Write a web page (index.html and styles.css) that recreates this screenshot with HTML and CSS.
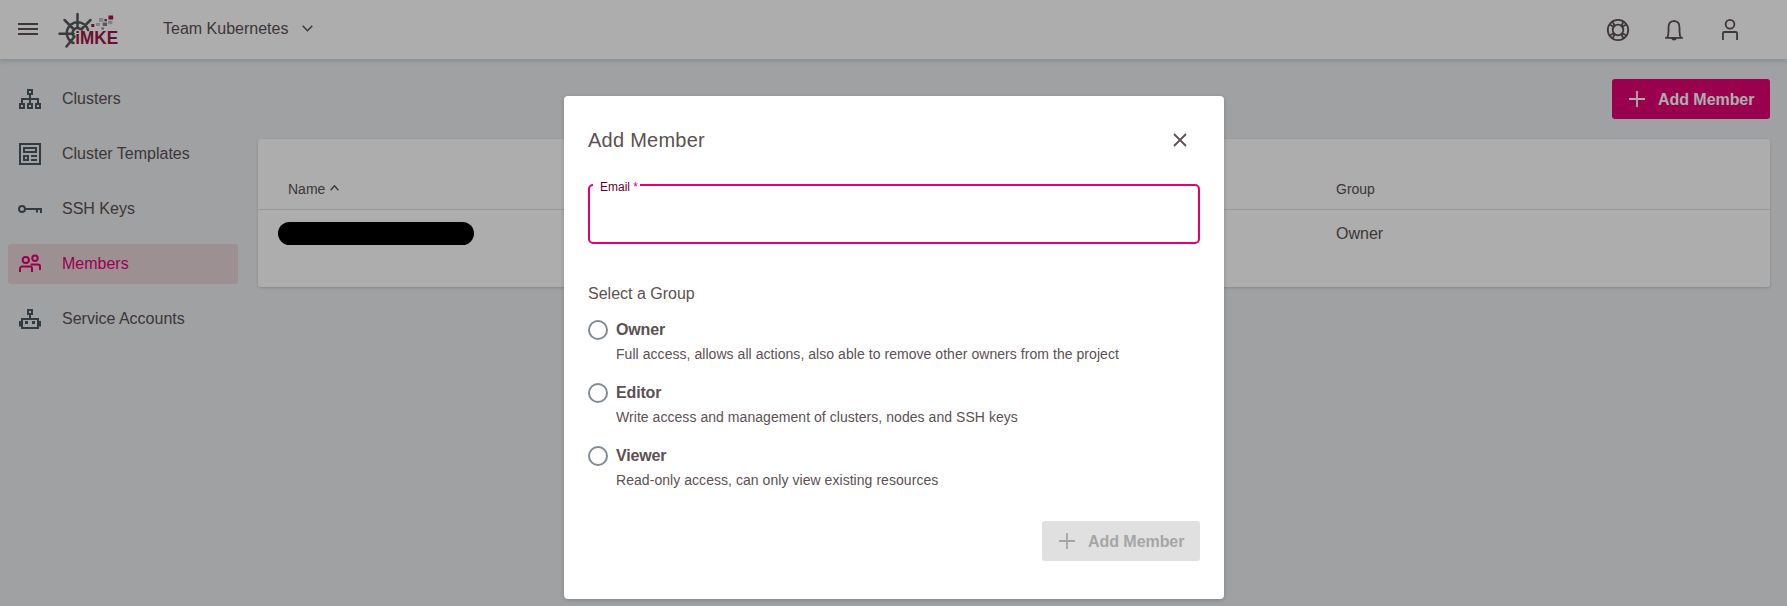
FILE: index.html
```html
<!DOCTYPE html>
<html lang="en">
<head>
<meta charset="utf-8">
<title>Members</title>
<link rel="stylesheet" href="styles.css">
</head>
<body>
<div class="app">
  <header class="topbar">
    <svg class="menu-icon" width="20" height="12" viewBox="0 0 20 12"><path d="M0 1h20M0 6h20M0 11h20"/></svg>
    <svg class="logo" width="62" height="38" viewBox="0 0 62 38">
      <g class="wheel">
        <path d="M15.500 31A10.800 10.800 0 1 1 30 18M16 24.500A5 5 0 0 1 20 16L24 17.500M19.500 2v14M1.500 21.800h14M6.500 8l9.500 9.500M32.500 8l-9 9M8.500 34.500l8-10"/>
      </g>
      <g class="crimson"><rect x="50.500" y="3.500" width="4.700" height="4"/><rect x="33.300" y="12" width="3" height="3"/><rect x="46.500" y="7" width="2.300" height="2.300"/></g>
      <g class="pale"><rect x="41" y="6" width="4.300" height="3.800"/><rect x="50" y="8.700" width="4.300" height="3.500"/><rect x="38" y="11" width="4" height="3"/></g>
      <rect class="slate" x="44.700" y="10.500" width="4.300" height="3.500"/>
      <rect class="rose" x="43.300" y="15.300" width="2.700" height="2.400"/>
      <text x="17.300" y="32.300" textLength="42.800" lengthAdjust="spacingAndGlyphs">iMKE</text>
    </svg>
    <div class="project"><span>Team Kubernetes</span>
      <svg width="11" height="7" viewBox="0 0 11 7"><path d="M.7.8l4.800 4.900L10.300.8"/></svg>
    </div>
    <div class="tools">
      <svg width="24" height="24" viewBox="0 0 24 24"><circle cx="12" cy="12" r="10.200"/><circle cx="12" cy="12" r="5.300"/><path d="M8.700 7.800L6.700 4M7.800 8.700L4 6.700M15.300 7.800L17.300 4M16.200 8.700L20 6.700M8.700 16.200L6.700 20M7.800 15.300L4 17.300M15.300 16.200L17.300 20M16.200 15.300L20 17.300"/></svg>
      <svg width="24" height="24" viewBox="0 0 24 24"><path d="M3.200 19.800h17.600M5.200 19.500c1.200-2 1.300-4 1.300-6.500V9.500C6.500 5.500 8.500 3.200 12 3.200s5.500 2.300 5.500 6.300V13c0 2.500.1 4.500 1.300 6.500M12 1.900v1.300M10.300 20.500a1.700 1.200 0 0 0 3.400 0"/></svg>
      <svg width="24" height="24" viewBox="0 0 24 24"><circle cx="12" cy="6.200" r="4.400"/><path d="M4.900 22v-6.500a1.500 1.500 0 0 1 1.500-1.500h11.200a1.500 1.500 0 0 1 1.500 1.500V22"/></svg>
    </div>
  </header>
  <div class="body">
    <nav class="sidebar">
      <a class="item"><svg viewBox="0 0 24 24"><path d="M10 3h4v4h-4zM2 17h4v4H2zM10 17h4v4h-4zM18 17h4v4h-4zM12 7v10M4 17v-5h16v5"/></svg><span>Clusters</span></a>
      <a class="item"><svg viewBox="0 0 24 24"><path d="M2 2h20v20H2zM6 6h12v4H6zM6 14h4v4H6zM13 14h6M13 18h6"/></svg><span>Cluster Templates</span></a>
      <a class="item"><svg viewBox="0 0 24 24"><circle cx="4" cy="12" r="3"/><path d="M7 12h16v4M19 12v3.500"/></svg><span>SSH Keys</span></a>
      <a class="item active"><svg viewBox="0 0 24 24"><circle cx="7.800" cy="8" r="3.100"/><circle cx="17" cy="6.300" r="2.700"/><path d="M2 20v-3.500a2 2 0 0 1 2-2h8a2 2 0 0 1 2 2V20M12.700 12.500H20a2 2 0 0 1 2 2V18"/></svg><span>Members</span></a>
      <a class="item"><svg viewBox="0 0 24 24"><path d="M10 3h4v4h-4zM12 7v4M4 12h16v9H4zM2 14v5.500M22 14v5.500"/><path class="eyes" d="M7 15.500h3M14 15.500h3"/></svg><span>Service Accounts</span></a>
    </nav>
    <main class="content">
      <button class="btn"><svg width="16" height="16" viewBox="0 0 16 16"><path d="M8 0v16M0 8h16"/></svg><span>Add Member</span></button>
      <section class="card">
        <div class="row head"><div class="cell">Name<svg width="9" height="6" viewBox="0 0 9 6"><path d="M.6 5.200L4.500.9l3.900 4.300"/></svg></div><div class="cell">Group</div></div>
        <div class="row"><div class="cell"><span class="redacted"></span></div><div class="cell">Owner</div></div>
      </section>
    </main>
  </div>
</div>
<div class="backdrop">
  <div class="dialog">
    <div class="title"><h1>Add Member</h1><svg width="14" height="14" viewBox="0 0 14 14"><path d="M1 1l12 12M13 1L1 13"/></svg></div>
    <fieldset class="field"><legend><span>Email <i>*</i></span></legend></fieldset>
    <p class="group-title">Select a Group</p>
    <label class="option"><span class="radio"></span><span class="text"><b>Owner</b><small>Full access, allows all actions, also able to remove other owners from the project</small></span></label>
    <label class="option"><span class="radio"></span><span class="text"><b>Editor</b><small>Write access and management of clusters, nodes and SSH keys</small></span></label>
    <label class="option"><span class="radio"></span><span class="text"><b>Viewer</b><small>Read-only access, can only view existing resources</small></span></label>
    <button class="btn disabled"><svg width="16" height="16" viewBox="0 0 16 16"><path d="M8 0v16M0 8h16"/></svg><span>Add Member</span></button>
  </div>
</div>
</body>
</html>
```
FILE: styles.css
```css
* { box-sizing: border-box; }
body { margin: 0; height: 606px; overflow: hidden; font: 16px/20px "Liberation Sans", Arial, sans-serif; color: #5c5053; background: #ebeef0; }
svg { display: block; flex: none; fill: none; stroke: currentColor; stroke-width: 1.8; overflow: visible; }
.app { height: 606px; display: flex; flex-direction: column; }
.topbar { height: 59px; flex: none; display: flex; align-items: center; padding: 0 45px 0 18px; background: #fff; box-shadow: 0 1px 5px 1px #c8cdd0; }
.menu-icon { stroke-width: 2; margin: 0 20px 2px 0; }
.logo { margin: 3px 43px 0 0; }
.wheel { stroke: #55595b; stroke-width: 2.5; stroke-linecap: round; }
.logo rect, .logo text { stroke: none; }
.crimson, .logo text { fill: #9c1746; }
.pale { fill: #bcc5c5; }
.slate { fill: #78878a; }
.rose { fill: #c7879c; }
.logo text { font-size: 18.5px; font-weight: bold; }
.project { display: flex; align-items: center; gap: 14px; margin-bottom: 2px; }
.project svg { stroke-width: 1.5; }
.tools { display: flex; gap: 32px; margin-left: auto; }
.body { flex: 1; display: flex; padding: 20px 17px 0 8px; }
.sidebar { width: 230px; margin-right: 20px; display: flex; flex-direction: column; gap: 15px; }
.item { height: 40px; display: flex; align-items: center; padding-left: 10px; gap: 20px; border-radius: 3px; }
.item svg { width: 24px; height: 24px; stroke-width: 2; color: #4b585f; }
.item .eyes { stroke-width: 3; }
.item.active { background: #e8d4d7; color: #e20074; }
.item.active svg { color: inherit; }
.content { flex: 1; display: flex; flex-direction: column; gap: 20px; }
.btn { align-self: flex-end; width: 158px; height: 40px; border: 0; border-radius: 3px; background: #e20074; color: #fff; font: bold 16px "Liberation Sans", Arial, sans-serif; display: flex; align-items: center; padding: 0 0 0 17px; gap: 13px; }
.btn span { margin-top: 2px; letter-spacing: -.05px; }
.card { height: 148px; background: #fff; border-radius: 3px; box-shadow: 0 1px 3px #c2c7ca; }
.row { display: grid; grid-template-columns: 1048px 1fr; padding: 14px 0 0 30px; }
.row.head { height: 71px; padding-top: 40px; font-size: 14px; border-bottom: 1px solid #dfe0e2; }
.cell { display: flex; align-items: flex-start; }
.cell svg { margin: 6px 0 0 5px; stroke-width: 1.4; }
.redacted { width: 196px; height: 23px; margin: -2px 0 0 -10px; border-radius: 12px; background: #000; }
.backdrop { position: absolute; inset: 0; background: rgba(0,0,0,.32); padding-top: 96px; }
.dialog { width: 660px; height: 503px; margin: 0 auto 0 564px; padding: 24px; background: #fff; border-radius: 4px; box-shadow: 0 1px 4px rgba(0,0,0,.2); display: flex; flex-direction: column; }
.title { height: 41px; display: flex; align-items: center; justify-content: space-between; padding-right: 13px; }
.title svg { margin-bottom: 1px; }
h1 { font-size: 20px; font-weight: normal; letter-spacing: .25px; margin: 0 0 2px; }
.field { height: 66px; flex: none; margin: 17px 0 0; padding: 0 5px; border: 2px solid #e20074; border-radius: 5px; }
legend { height: 14px; margin-left: -2px; padding: 0 2px 0 7px; font-size: 12px; line-height: 14px; color: #640034; }
legend span { display: block; padding-top: 2px; }
legend i { color: #e20074; font-style: normal; }
.group-title { margin: 40px 0 16px; }
.option { height: 63px; flex: none; display: flex; gap: 8px; }
.radio { width: 20px; height: 20px; border: 2px solid #808b94; border-radius: 50%; }
.text { display: flex; flex-direction: column; }
.text b { line-height: 20px; letter-spacing: -.15px; }
.text small { margin-top: 4px; font-size: 14px; line-height: 20px; letter-spacing: .05px; }
.disabled { background: #e0e0e0; color: #a6a6a6; margin-top: 12px; flex: none; }
```
